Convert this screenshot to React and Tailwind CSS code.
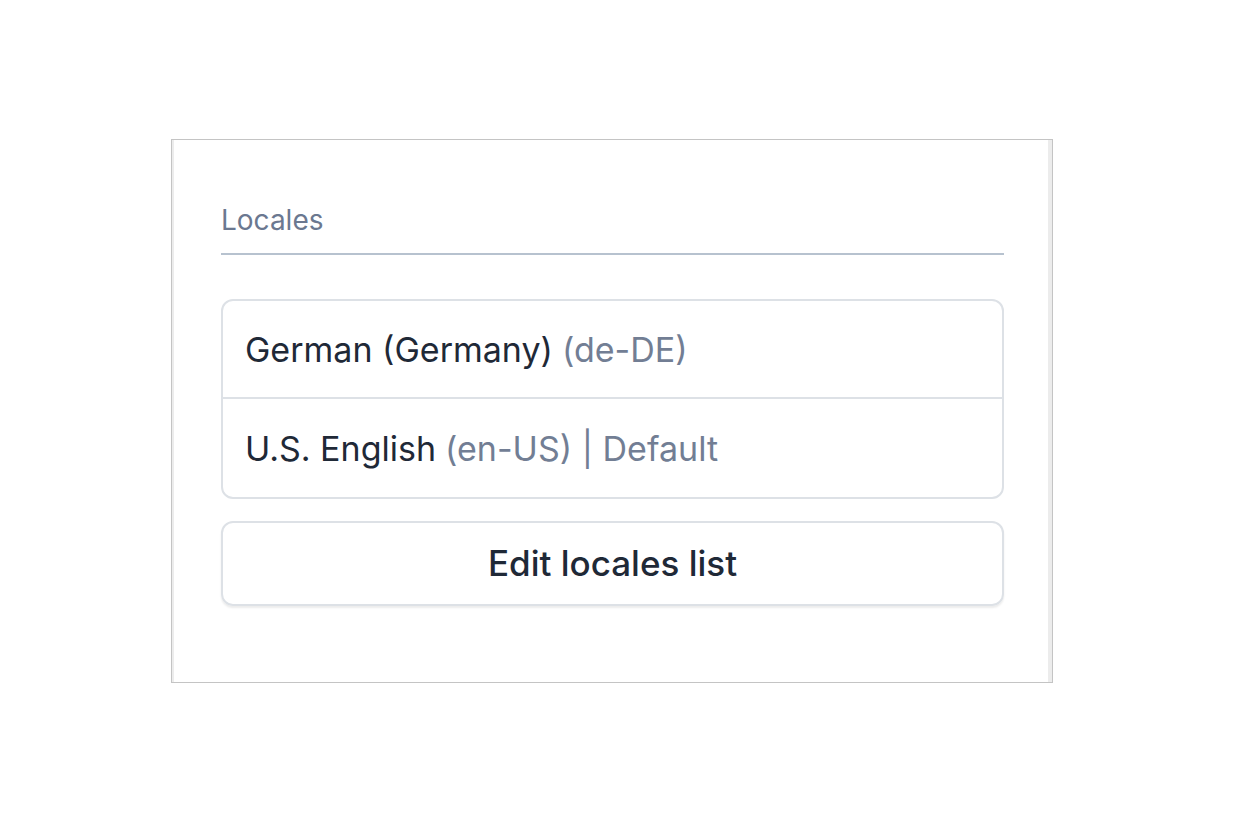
export default function App() {
  return (
    <div className="w-[1252px] h-[824px] bg-white" style={{ fontFamily: 'Inter, "Noto Sans", sans-serif' }}>
      <div className="pt-[139px] pl-[171px]">
        <div className="w-[882px] h-[544px] border border-[#c4c4c4] flex">
          <div className="w-[2px] bg-[#ececec]" />
          <div className="flex-1 pl-[47px] pr-[44px] pt-[63px]">
            <div className="text-[28px] leading-[34px] text-[#6b7890]">Locales</div>
            <div className="h-[2px] bg-[#b7c2cf] mt-[16px]" />
            <div className="mt-[44px] border-2 border-[#dde1e6] rounded-[12px]">
              <div className="h-[98px] flex items-center px-[22px] text-[34px] text-[#1f2937] border-b-2 border-[#dde1e6]">
                German (Germany)<span className="text-[#727e94] ml-[9px]">(de-DE)</span>
              </div>
              <div className="h-[98px] flex items-center px-[22px] text-[34px] text-[#1f2937]">
                U.S. English<span className="text-[#727e94] ml-[9px]">(en-US) | Default</span>
              </div>
            </div>
            <div className="mt-[22px] h-[85px] border-2 border-[#dde1e6] rounded-[12px] shadow-[0_2px_2px_rgba(0,0,0,0.08)] flex items-center justify-center text-[35px] font-medium text-[#1f2937]">
              Edit locales list
            </div>
          </div>
          <div className="w-[4px] bg-[#ececec]" />
        </div>
      </div>
    </div>
  );
}
